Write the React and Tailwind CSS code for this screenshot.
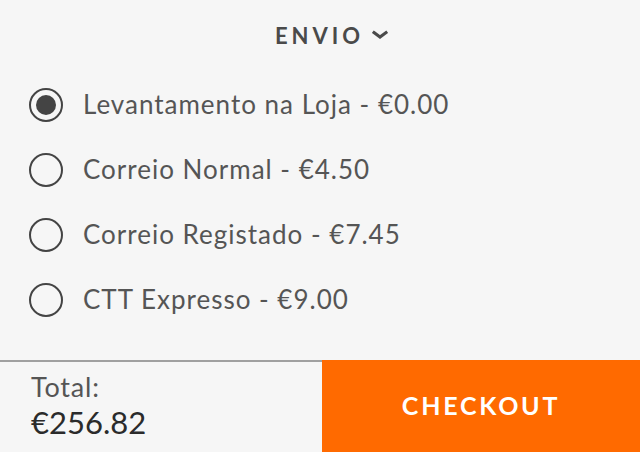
import { useState } from "react";

const OPTIONS = [
  { id: "loja", label: "Levantamento na Loja - €0.00" },
  { id: "normal", label: "Correio Normal - €4.50" },
  { id: "registado", label: "Correio Registado - €7.45" },
  { id: "ctt", label: "CTT Expresso - €9.00" },
];

export default function App() {
  const [selected, setSelected] = useState("loja");

  return (
    <div
      className="w-[640px] h-[452px] bg-[#f6f6f6] flex flex-col overflow-hidden"
      style={{ fontFamily: "Lato, 'Open Sans', sans-serif" }}
    >
      {/* Header */}
      <div className="h-[70px] flex items-center justify-center gap-[8px] pl-[23px]">
        <span className="text-[22px] font-bold tracking-[4px] text-[#4a4a4a]">ENVIO</span>
        <svg width="16" height="10" viewBox="0 0 16 10" className="mt-[-1px]">
          <path d="M2 2.5 L8 7 L14 2.5" fill="none" stroke="#4a4a4a" strokeWidth="3" strokeLinecap="square" />
        </svg>
      </div>

      {/* Options */}
      <div className="flex-1 flex flex-col pl-[29px] pt-[2px]">
        {OPTIONS.map((o) => {
          const active = selected === o.id;
          return (
            <button
              key={o.id}
              onClick={() => setSelected(o.id)}
              className="h-[65px] flex items-center gap-[20px] text-left"
            >
              <span className="w-[34px] h-[34px] rounded-full border-2 border-[#444] flex items-center justify-center">
                {active && <span className="w-[20px] h-[20px] rounded-full bg-[#444]" />}
              </span>
              <span className="text-[26px] tracking-[1px] text-[#555]">{o.label}</span>
            </button>
          );
        })}
      </div>

      {/* Footer */}
      <div className="h-[92px] flex">
        <div className="w-[322px] border-t-2 border-[#a0a0a0] flex flex-col pl-[31px] pt-[10px]">
          <span className="text-[27px] tracking-[0.8px] leading-[30px] text-[#555]">Total:</span>
          <span className="text-[31px] leading-[36px] mt-[2px] text-[#2b2b2b]">€256.82</span>
        </div>
        <button className="flex-1 bg-[#ff6a00] flex items-center justify-center">
          <span className="text-[25px] font-bold tracking-[2.75px] text-white">CHECKOUT</span>
        </button>
      </div>
    </div>
  );
}
